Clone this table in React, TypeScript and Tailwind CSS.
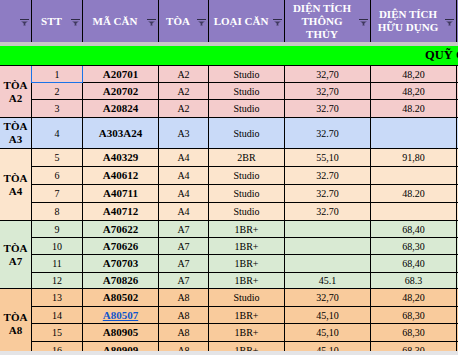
const groups = [
  { label: "A2", h: "h-[52px]", bg: "bg-[#f4cccc]" },
  { label: "A3", h: "h-[31px]", bg: "bg-[#c9daf8]" },
  { label: "A4", h: "h-[72px]", bg: "bg-[#fce5cd]" },
  { label: "A7", h: "h-[68px]", bg: "bg-[#d9ead3]" },
  { label: "A8", h: "h-[71px]", bg: "bg-[#f9cb9c]" },
];

const rows = [
  { stt: "1", code: "A20701", toa: "A2", type: "Studio", tt: "32,70", hd: "48,20", h: "h-[17px]", bg: "bg-[#f4cccc]" },
  { stt: "2", code: "A20702", toa: "A2", type: "Studio", tt: "32,70", hd: "48,20", h: "h-[17px]", bg: "bg-[#f4cccc]" },
  { stt: "3", code: "A20824", toa: "A2", type: "Studio", tt: "32.70", hd: "48.20", h: "h-[18px]", bg: "bg-[#f4cccc]" },
  { stt: "4", code: "A303A24", toa: "A3", type: "Studio", tt: "32.70", hd: "", h: "h-[31px]", bg: "bg-[#c9daf8]" },
  { stt: "5", code: "A40329", toa: "A4", type: "2BR", tt: "55,10", hd: "91,80", h: "h-[18px]", bg: "bg-[#fce5cd]" },
  { stt: "6", code: "A40612", toa: "A4", type: "Studio", tt: "32.70", hd: "", h: "h-[18px]", bg: "bg-[#fce5cd]" },
  { stt: "7", code: "A40711", toa: "A4", type: "Studio", tt: "32.70", hd: "48.20", h: "h-[18px]", bg: "bg-[#fce5cd]" },
  { stt: "8", code: "A40712", toa: "A4", type: "Studio", tt: "32.70", hd: "", h: "h-[18px]", bg: "bg-[#fce5cd]" },
  { stt: "9", code: "A70622", toa: "A7", type: "1BR+", tt: "", hd: "68,40", h: "h-[17px]", bg: "bg-[#d9ead3]" },
  { stt: "10", code: "A70626", toa: "A7", type: "1BR+", tt: "", hd: "68,30", h: "h-[17px]", bg: "bg-[#d9ead3]" },
  { stt: "11", code: "A70703", toa: "A7", type: "1BR+", tt: "", hd: "68,40", h: "h-[18px]", bg: "bg-[#d9ead3]" },
  { stt: "12", code: "A70826", toa: "A7", type: "1BR+", tt: "45.1", hd: "68.3", h: "h-[16px]", bg: "bg-[#d9ead3]" },
  { stt: "13", code: "A80502", toa: "A8", type: "Studio", tt: "32,70", hd: "48,20", h: "h-[18px]", bg: "bg-[#f9cb9c]" },
  { stt: "14", code: "A80507", toa: "A8", type: "1BR+", tt: "45,10", hd: "68,30", h: "h-[17px]", bg: "bg-[#f9cb9c]", link: true },
  { stt: "15", code: "A80905", toa: "A8", type: "1BR+", tt: "45,10", hd: "68,30", h: "h-[18px]", bg: "bg-[#f9cb9c]" },
  { stt: "16", code: "A80909", toa: "A8", type: "1BR+", tt: "45,10", hd: "68,30", h: "h-[18px]", bg: "bg-[#f9cb9c]" },
];

function FilterIcon() {
  return (
    <svg width="9" height="7" viewBox="0 0 9 7" className="shrink-0 mr-[2px] mt-[3px]">
      <rect x="0" y="0" width="9" height="1" fill="#2f2b45" />
      <path d="M1 2h7L5.6 4.6V7H3.4V4.6z" fill="#675d8f" />
      <path d="M2.5 3h4L5 4.5V6H4V4.5z" fill="#3f3760" />
    </svg>
  );
}

function HeadCell({ w, children }: { w: string; children?: React.ReactNode }) {
  return (
    <div className={`${w} h-full shrink-0 flex items-center border-r border-black`}>
      <div className="flex-1 text-center text-white font-bold text-[11px] leading-[13px]">{children}</div>
      <FilterIcon />
    </div>
  );
}

const cell = "h-full shrink-0 flex items-center justify-center border-r border-b border-black";

export default function App() {
  return (
    <div className="w-[458px] h-[355px] overflow-hidden flex flex-col bg-white text-black" style={{ fontFamily: '"Liberation Serif", "Times New Roman", serif' }}>
      {/* header */}
      <div className="h-[42px] shrink-0 flex bg-[#8e7cc3]">
        <HeadCell w="w-[32px]" />
        <HeadCell w="w-[51px]">STT</HeadCell>
        <HeadCell w="w-[76px]">MÃ CĂN</HeadCell>
        <HeadCell w="w-[50px]">TÒA</HeadCell>
        <HeadCell w="w-[76px]">LOẠI CĂN</HeadCell>
        <HeadCell w="w-[86px]">
          DIỆN TÍCH
          <br />
          THÔNG
          <br />
          THỦY
        </HeadCell>
        <HeadCell w="w-[86px]">
          DIỆN TÍCH
          <br />
          HỮU DỤNG
        </HeadCell>
        <div className="flex-1" />
      </div>

      {/* frozen divider */}
      <div className="h-[4px] shrink-0 bg-[#c8c8c8]" />

      {/* section title */}
      <div className="h-[20px] shrink-0 bg-[#00ff00] border-b border-black flex items-center pl-[425px] overflow-hidden whitespace-nowrap">
        <span className="font-bold text-[12.5px]">QUỸ CĂN HỘ</span>
      </div>

      {/* body */}
      <div className="flex-1 min-h-0 overflow-hidden flex">
        <div className="w-[32px] shrink-0 flex flex-col">
          {groups.map((g) => (
            <div key={g.label} className={`${g.h} ${g.bg} shrink-0 flex items-center justify-center border-r border-b border-black text-center font-bold text-[11px] leading-[13px]`}>
              TÒA
              <br />
              {g.label}
            </div>
          ))}
        </div>
        <div className="flex-1 flex flex-col">
          {rows.map((r) => (
            <div key={r.stt} className={`${r.h} ${r.bg} shrink-0 flex text-[10px]`}>
              <div className={`${cell} w-[51px] relative`}>
                {r.stt}
                {r.stt === "1" && <div className="absolute -left-px -top-px w-[52px] h-[18px] border border-[#1a73e8]" />}
              </div>
              <div className={`${cell} w-[76px] font-bold text-[11px]`}>
                {r.link ? <span className="text-[#1155cc] underline">{r.code}</span> : r.code}
              </div>
              <div className={`${cell} w-[50px]`}>{r.toa}</div>
              <div className={`${cell} w-[76px]`}>{r.type}</div>
              <div className={`${cell} w-[86px]`}>{r.tt}</div>
              <div className={`${cell} w-[86px]`}>{r.hd}</div>
              <div className="flex-1 border-b border-black" />
            </div>
          ))}
        </div>
      </div>

      {/* scrollbar strip */}
      <div className="h-[4px] shrink-0 bg-[#e4e4e6]" />
    </div>
  );
}
